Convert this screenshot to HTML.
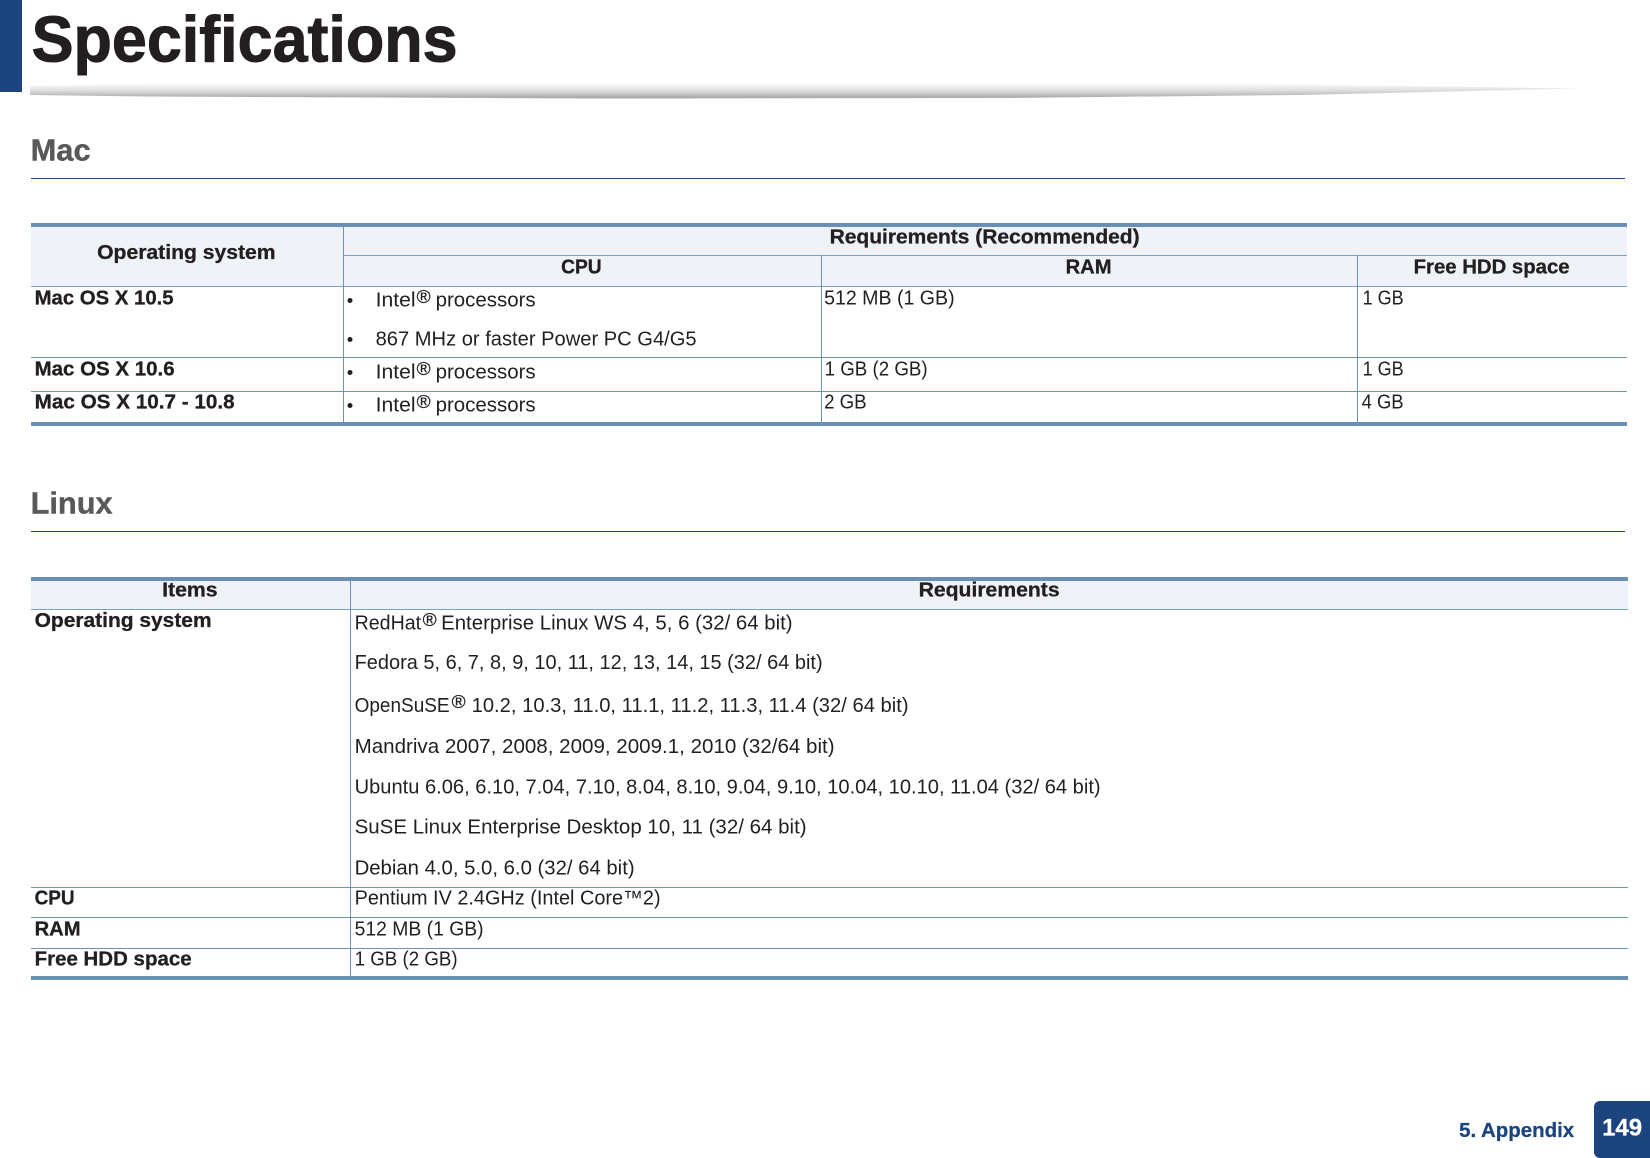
<!DOCTYPE html>
<html lang="en">
<head>
<meta charset="utf-8">
<title>Specifications</title>
<style>
html,body{margin:0;padding:0;background:#fff;width:1650px;height:1158px;overflow:hidden}
svg{display:block}
text{font-family:"Liberation Sans",sans-serif;fill:#231f20;font-size:20px;transform:translate(-.4px,-.5px)}
.b{font-weight:700}
.h{font-weight:700;font-size:20px;stroke:#231f20;stroke-width:.3px}
.r{font-size:18.5px;stroke:#231f20;stroke-width:.25px}
</style>
</head>
<body>
<svg xmlns="http://www.w3.org/2000/svg" width="1650" height="1158" viewBox="0 0 1650 1158">
<defs>
<linearGradient id="sh" gradientUnits="userSpaceOnUse" x1="0" y1="83" x2="0" y2="98.5">
<stop offset="0" stop-color="#fff"/><stop offset=".5" stop-color="#dedcdc"/><stop offset="1" stop-color="#a5a1a1"/>
</linearGradient>
</defs>
<rect width="1650" height="1158" fill="#fff"/>

<!-- Header -->
<rect x="0" y="0" width="22" height="92" fill="#1c4580"/>
<path d="M30 86 L30 95 L150 96.5 L600 98.5 L1000 98 L1300 95 L1578 88.5 L1200 83 L600 83 L200 83Z" fill="url(#sh)"/>
<text class="b" x="32" y="62" style="font-size:65px;stroke:#231f20;stroke-width:1px" textLength="426" lengthAdjust="spacingAndGlyphs">Specifications</text>

<!-- Mac -->
<text class="b" x="31" y="161" style="font-size:31px;fill:#58595b;stroke:#58595b;stroke-width:.4px" textLength="60" lengthAdjust="spacingAndGlyphs">Mac</text>
<rect x="31" y="178" width="1594" height="1" fill="#1c4580"/>

<rect x="31" y="227" width="1596" height="59" fill="#eff3f7"/>
<rect x="31" y="223" width="1596" height="4" fill="#6a8fb5"/>
<rect x="343" y="255" width="1284" height="1" fill="#7b9fc4"/>
<rect x="31" y="286" width="1596" height="1" fill="#7b9fc4"/>
<rect x="31" y="357" width="1596" height="1" fill="#6b93bc"/>
<rect x="31" y="391" width="1596" height="1" fill="#6b93bc"/>
<rect x="343" y="227" width="1" height="195" fill="#6b93bc"/>
<rect x="821" y="255" width="1" height="167" fill="#6b93bc"/>
<rect x="1357" y="255" width="1" height="167" fill="#6b93bc"/>
<rect x="31" y="422" width="1596" height="4" fill="#6a8fb5"/>

<text class="h" x="97.5" y="259.5" textLength="178.5" lengthAdjust="spacingAndGlyphs">Operating system</text>
<text class="h" x="830" y="244" textLength="310" lengthAdjust="spacingAndGlyphs">Requirements (Recommended)</text>
<text class="h" x="561.5" y="274" textLength="40.5" lengthAdjust="spacingAndGlyphs">CPU</text>
<text class="h" x="1066" y="274" textLength="46" lengthAdjust="spacingAndGlyphs">RAM</text>
<text class="h" x="1414" y="274" textLength="156" lengthAdjust="spacingAndGlyphs">Free HDD space</text>

<text class="h" x="35" y="305" textLength="139" lengthAdjust="spacingAndGlyphs">Mac OS X 10.5</text>
<text class="h" x="35" y="376" textLength="140" lengthAdjust="spacingAndGlyphs">Mac OS X 10.6</text>
<text class="h" x="35" y="409" textLength="200" lengthAdjust="spacingAndGlyphs">Mac OS X 10.7 - 10.8</text>

<circle cx="350" cy="300.5" r="2.5" fill="#231f20"/>
<circle cx="350" cy="339.5" r="2.5" fill="#231f20"/>
<circle cx="350" cy="372.5" r="2.5" fill="#231f20"/>
<circle cx="350" cy="405.5" r="2.5" fill="#231f20"/>

<text x="376" y="307" textLength="40" lengthAdjust="spacingAndGlyphs">Intel</text>
<text class="r" x="417" y="303.5" textLength="14" lengthAdjust="spacingAndGlyphs">®</text>
<text x="436" y="307" textLength="100" lengthAdjust="spacingAndGlyphs">processors</text>
<text x="376" y="346" textLength="321" lengthAdjust="spacingAndGlyphs">867 MHz or faster Power PC G4/G5</text>
<text x="376" y="379" textLength="40" lengthAdjust="spacingAndGlyphs">Intel</text>
<text class="r" x="417" y="375.5" textLength="14" lengthAdjust="spacingAndGlyphs">®</text>
<text x="436" y="379" textLength="100" lengthAdjust="spacingAndGlyphs">processors</text>
<text x="376" y="412" textLength="40" lengthAdjust="spacingAndGlyphs">Intel</text>
<text class="r" x="417" y="408.5" textLength="14" lengthAdjust="spacingAndGlyphs">®</text>
<text x="436" y="412" textLength="100" lengthAdjust="spacingAndGlyphs">processors</text>

<text x="824.5" y="305" textLength="130.5" lengthAdjust="spacingAndGlyphs">512 MB (1 GB)</text>
<text x="1363" y="305" textLength="41" lengthAdjust="spacingAndGlyphs">1 GB</text>
<text x="825" y="376" textLength="103" lengthAdjust="spacingAndGlyphs">1 GB (2 GB)</text>
<text x="1363" y="376" textLength="41" lengthAdjust="spacingAndGlyphs">1 GB</text>
<text x="824.5" y="409" textLength="42.5" lengthAdjust="spacingAndGlyphs">2 GB</text>
<text x="1362" y="409" textLength="42" lengthAdjust="spacingAndGlyphs">4 GB</text>

<!-- Linux -->
<text class="b" x="31" y="514" style="font-size:31px;fill:#58595b;stroke:#58595b;stroke-width:.4px" textLength="82" lengthAdjust="spacingAndGlyphs">Linux</text>
<rect x="31" y="531" width="1594" height="1" fill="#1c4580"/>

<rect x="31" y="581" width="1597" height="28" fill="#eff3f7"/>
<rect x="31" y="577" width="1597" height="4" fill="#6a8fb5"/>
<rect x="31" y="609" width="1597" height="1" fill="#7b9fc4"/>
<rect x="31" y="887" width="1597" height="1" fill="#6b93bc"/>
<rect x="31" y="917" width="1597" height="1" fill="#6b93bc"/>
<rect x="31" y="948" width="1597" height="1" fill="#6b93bc"/>
<rect x="350" y="581" width="1" height="395" fill="#6b93bc"/>
<rect x="31" y="976" width="1597" height="4" fill="#6a8fb5"/>

<text class="h" x="162.5" y="597" textLength="55.5" lengthAdjust="spacingAndGlyphs">Items</text>
<text class="h" x="919" y="597" textLength="141" lengthAdjust="spacingAndGlyphs">Requirements</text>

<text class="h" x="35" y="627.5" textLength="177" lengthAdjust="spacingAndGlyphs">Operating system</text>
<text class="h" x="35" y="905" textLength="40" lengthAdjust="spacingAndGlyphs">CPU</text>
<text class="h" x="35" y="936" textLength="46" lengthAdjust="spacingAndGlyphs">RAM</text>
<text class="h" x="35" y="966" textLength="157" lengthAdjust="spacingAndGlyphs">Free HDD space</text>

<text x="355" y="630" textLength="66.5" lengthAdjust="spacingAndGlyphs">RedHat</text>
<text class="r" x="423" y="626.5" textLength="14" lengthAdjust="spacingAndGlyphs">®</text>
<text x="441.5" y="630" textLength="351.5" lengthAdjust="spacingAndGlyphs">Enterprise Linux WS 4, 5, 6 (32/ 64 bit)</text>
<text x="355" y="669.5" textLength="468" lengthAdjust="spacingAndGlyphs">Fedora 5, 6, 7, 8, 9, 10, 11, 12, 13, 14, 15 (32/ 64 bit)</text>
<text x="355" y="712.5" textLength="95" lengthAdjust="spacingAndGlyphs">OpenSuSE</text>
<text class="r" x="452" y="708.5" textLength="14" lengthAdjust="spacingAndGlyphs">®</text>
<text x="472" y="712.5" textLength="437" lengthAdjust="spacingAndGlyphs">10.2, 10.3, 11.0, 11.1, 11.2, 11.3, 11.4 (32/ 64 bit)</text>
<text x="355" y="753.5" textLength="480" lengthAdjust="spacingAndGlyphs">Mandriva 2007, 2008, 2009, 2009.1, 2010 (32/64 bit)</text>
<text x="355" y="794" textLength="746" lengthAdjust="spacingAndGlyphs">Ubuntu 6.06, 6.10, 7.04, 7.10, 8.04, 8.10, 9.04, 9.10, 10.04, 10.10, 11.04 (32/ 64 bit)</text>
<text x="355" y="834" textLength="452" lengthAdjust="spacingAndGlyphs">SuSE Linux Enterprise Desktop 10, 11 (32/ 64 bit)</text>
<text x="355" y="875" textLength="280" lengthAdjust="spacingAndGlyphs">Debian 4.0, 5.0, 6.0 (32/ 64 bit)</text>
<text x="355" y="905" textLength="306" lengthAdjust="spacingAndGlyphs">Pentium IV 2.4GHz (Intel Core™2)</text>
<text x="355" y="936" textLength="129" lengthAdjust="spacingAndGlyphs">512 MB (1 GB)</text>
<text x="355" y="966" textLength="103" lengthAdjust="spacingAndGlyphs">1 GB (2 GB)</text>

<!-- Footer -->
<path d="M1650 1101 H1600 a6 6 0 0 0 -6 6 V1152 a6 6 0 0 0 6 6 H1650Z" fill="#1c4580"/>
<text class="b" x="1602.5" y="1136" style="font-size:24px;fill:#fff;stroke:#fff;stroke-width:.3px" textLength="40" lengthAdjust="spacingAndGlyphs">149</text>
<text class="b" x="1459.5" y="1137.5" style="font-size:20px;fill:#1c4580;stroke:#1c4580;stroke-width:.3px" textLength="115" lengthAdjust="spacingAndGlyphs">5. Appendix</text>
</svg>
</body>
</html>
